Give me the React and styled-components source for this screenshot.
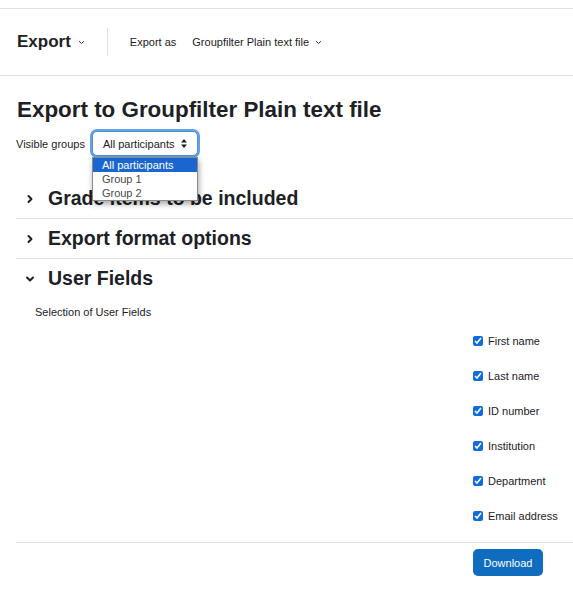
import styled, { createGlobalStyle } from "styled-components";

const GlobalStyle = createGlobalStyle`
  body {
    margin: 0;
    background: #fff;
    font-family: "Liberation Sans", Arial, sans-serif;
    color: #1d2125;
  }
`

const Page = styled.div`
  padding-top: 8px;
  width: 573px;
  overflow: hidden;
`

const TopBar = styled.div`
  display: flex;
  align-items: center;
  height: 66px;
  border-top: 1px solid #dee2e6;
  border-bottom: 1px solid #dee2e6;
  padding-left: 17px;
`

const PageMenu = styled.div`
  display: flex;
  align-items: center;
  gap: 7px;
  font-size: 17px;
  font-weight: 700;
  padding-right: 22px;
  height: 28px;
  border-right: 1px solid #dee2e6;
`

const ExportAs = styled.div`
  display: flex;
  align-items: center;
  font-size: 11px;
  padding-left: 22px;
  gap: 16px;
`

const FormatPick = styled.span`
  display: flex;
  align-items: center;
  gap: 6px;
`

const Main = styled.div`
  padding: 21px 0 0 16px;
`

const Title = styled.h2`
  margin: 0 0 0 1px;
  font-size: 22.4px;
  font-weight: 700;
  line-height: 26px;
`

const GroupRow = styled.div`
  display: flex;
  align-items: center;
  gap: 5px;
  margin-top: 6px;
  font-size: 11px;
`

const SelectWrap = styled.div`
  position: relative;
`

const SelectBox = styled.div`
  display: flex;
  align-items: center;
  justify-content: space-between;
  white-space: nowrap;
  width: 106px;
  height: 25px;
  box-sizing: border-box;
  padding: 0 10px 0 10px;
  border: 1px solid #4b8fdb;
  border-radius: 5px;
  box-shadow: 0 0 0 2px #64a2e6;
  margin: 2px;
  background: #fff;
`

const Options = styled.ul`
  position: absolute;
  top: 28px;
  left: 2px;
  width: 106px;
  box-sizing: border-box;
  margin: 0;
  padding: 0;
  list-style: none;
  background: #fff;
  border: 1px solid #8a8a8a;
  box-shadow: 1px 3px 6px rgba(0, 0, 0, 0.35);
  z-index: 5;
`

const Option = styled.li`
  height: 14px;
  line-height: 14px;
  padding-left: 9px;
  font-size: 11px;
  white-space: nowrap;
  color: ${(p) => (p.$active ? "#fff" : "#4a4a4a")};
  background: ${(p) => (p.$active ? "#1a66d1" : "transparent")};
`

const Section = styled.div`
  border-bottom: ${(p) => (p.$last ? "none" : "1px solid #dee2e6")};
`

const SectionHead = styled.div`
  display: flex;
  align-items: center;
  height: 39px;
  padding-left: 9px;
  gap: 13px;
  font-size: 19.5px;
  font-weight: 700;
`

const Sections = styled.div`
  margin-top: 21px;
`

const FieldsBody = styled.div`
  display: grid;
  grid-template-columns: 1fr 100px;
  font-size: 11px;
`

const Caption = styled.div`
  grid-column: 1 / 3;
  padding: 8px 0 0 19px;
  height: 17px;
`

const CheckList = styled.div`
  grid-column: 2;
  display: flex;
  flex-direction: column;
`

const CheckRow = styled.label`
  display: flex;
  align-items: center;
  gap: 5px;
  height: 35px;
`

const Check = styled.input`
  margin: 0;
  width: 10px;
  height: 10px;
  accent-color: #0f6cde;
`

const Footer = styled.div`
  border-top: 1px solid #dee2e6;
  margin-top: 9px;
  display: grid;
  grid-template-columns: 1fr 100px;
  padding-top: 6px;
`

const Button = styled.button`
  grid-column: 2;
  justify-self: start;
  width: 70px;
  height: 27px;
  border: none;
  border-radius: 5px;
  background: #0f6cbf;
  color: #fff;
  font-family: inherit;
  font-size: 11px;
`

const Chevron = ({ dir = "down", size = 8, w = 1.6 }) => {
  const d = {
    down: "M2 3.5 L5 6.5 L8 3.5",
    right: "M3.5 2 L6.5 5 L3.5 8",
  }[dir]
  return (
    <svg width={size} height={size} viewBox="0 0 10 10" fill="none">
      <path d={d} stroke="#1d2125" strokeWidth={w} strokeLinecap="round" strokeLinejoin="round" />
    </svg>
  )
}

const UpDown = () => (
  <svg width="6" height="9" viewBox="0 0 6 9">
    <path d="M3 0 L6 3.5 H0 Z M3 9 L0 5.5 H6 Z" fill="#1d2125" />
  </svg>
)

const fields = ["First name", "Last name", "ID number", "Institution", "Department", "Email address"]

export default function App() {
  return (
    <Page>
      <GlobalStyle />
      <TopBar>
        <PageMenu>
          Export <Chevron size={7} w={1.4} />
        </PageMenu>
        <ExportAs>
          <span>Export as</span>
          <FormatPick>
            Groupfilter Plain text file <Chevron size={7} w={1.4} />
          </FormatPick>
        </ExportAs>
      </TopBar>
      <Main>
        <Title>Export to Groupfilter Plain text file</Title>
        <GroupRow>
          <span>Visible groups</span>
          <SelectWrap>
            <SelectBox>
              All participants <UpDown />
            </SelectBox>
            <Options>
              <Option $active>All participants</Option>
              <Option>Group 1</Option>
              <Option>Group 2</Option>
            </Options>
          </SelectWrap>
        </GroupRow>
        <Sections>
          <Section>
            <SectionHead>
              <Chevron dir="right" size={10} w={2} />
              Grade items to be included
            </SectionHead>
          </Section>
          <Section>
            <SectionHead>
              <Chevron dir="right" size={10} w={2} />
              Export format options
            </SectionHead>
          </Section>
          <Section $last>
            <SectionHead>
              <Chevron dir="down" size={10} w={2} />
              User Fields
            </SectionHead>
            <FieldsBody>
              <Caption>Selection of User Fields</Caption>
              <CheckList>
                {fields.map((f) => (
                  <CheckRow key={f}>
                    <Check type="checkbox" defaultChecked />
                    {f}
                  </CheckRow>
                ))}
              </CheckList>
            </FieldsBody>
          </Section>
        </Sections>
        <Footer>
          <Button>Download</Button>
        </Footer>
      </Main>
    </Page>
  )
}
